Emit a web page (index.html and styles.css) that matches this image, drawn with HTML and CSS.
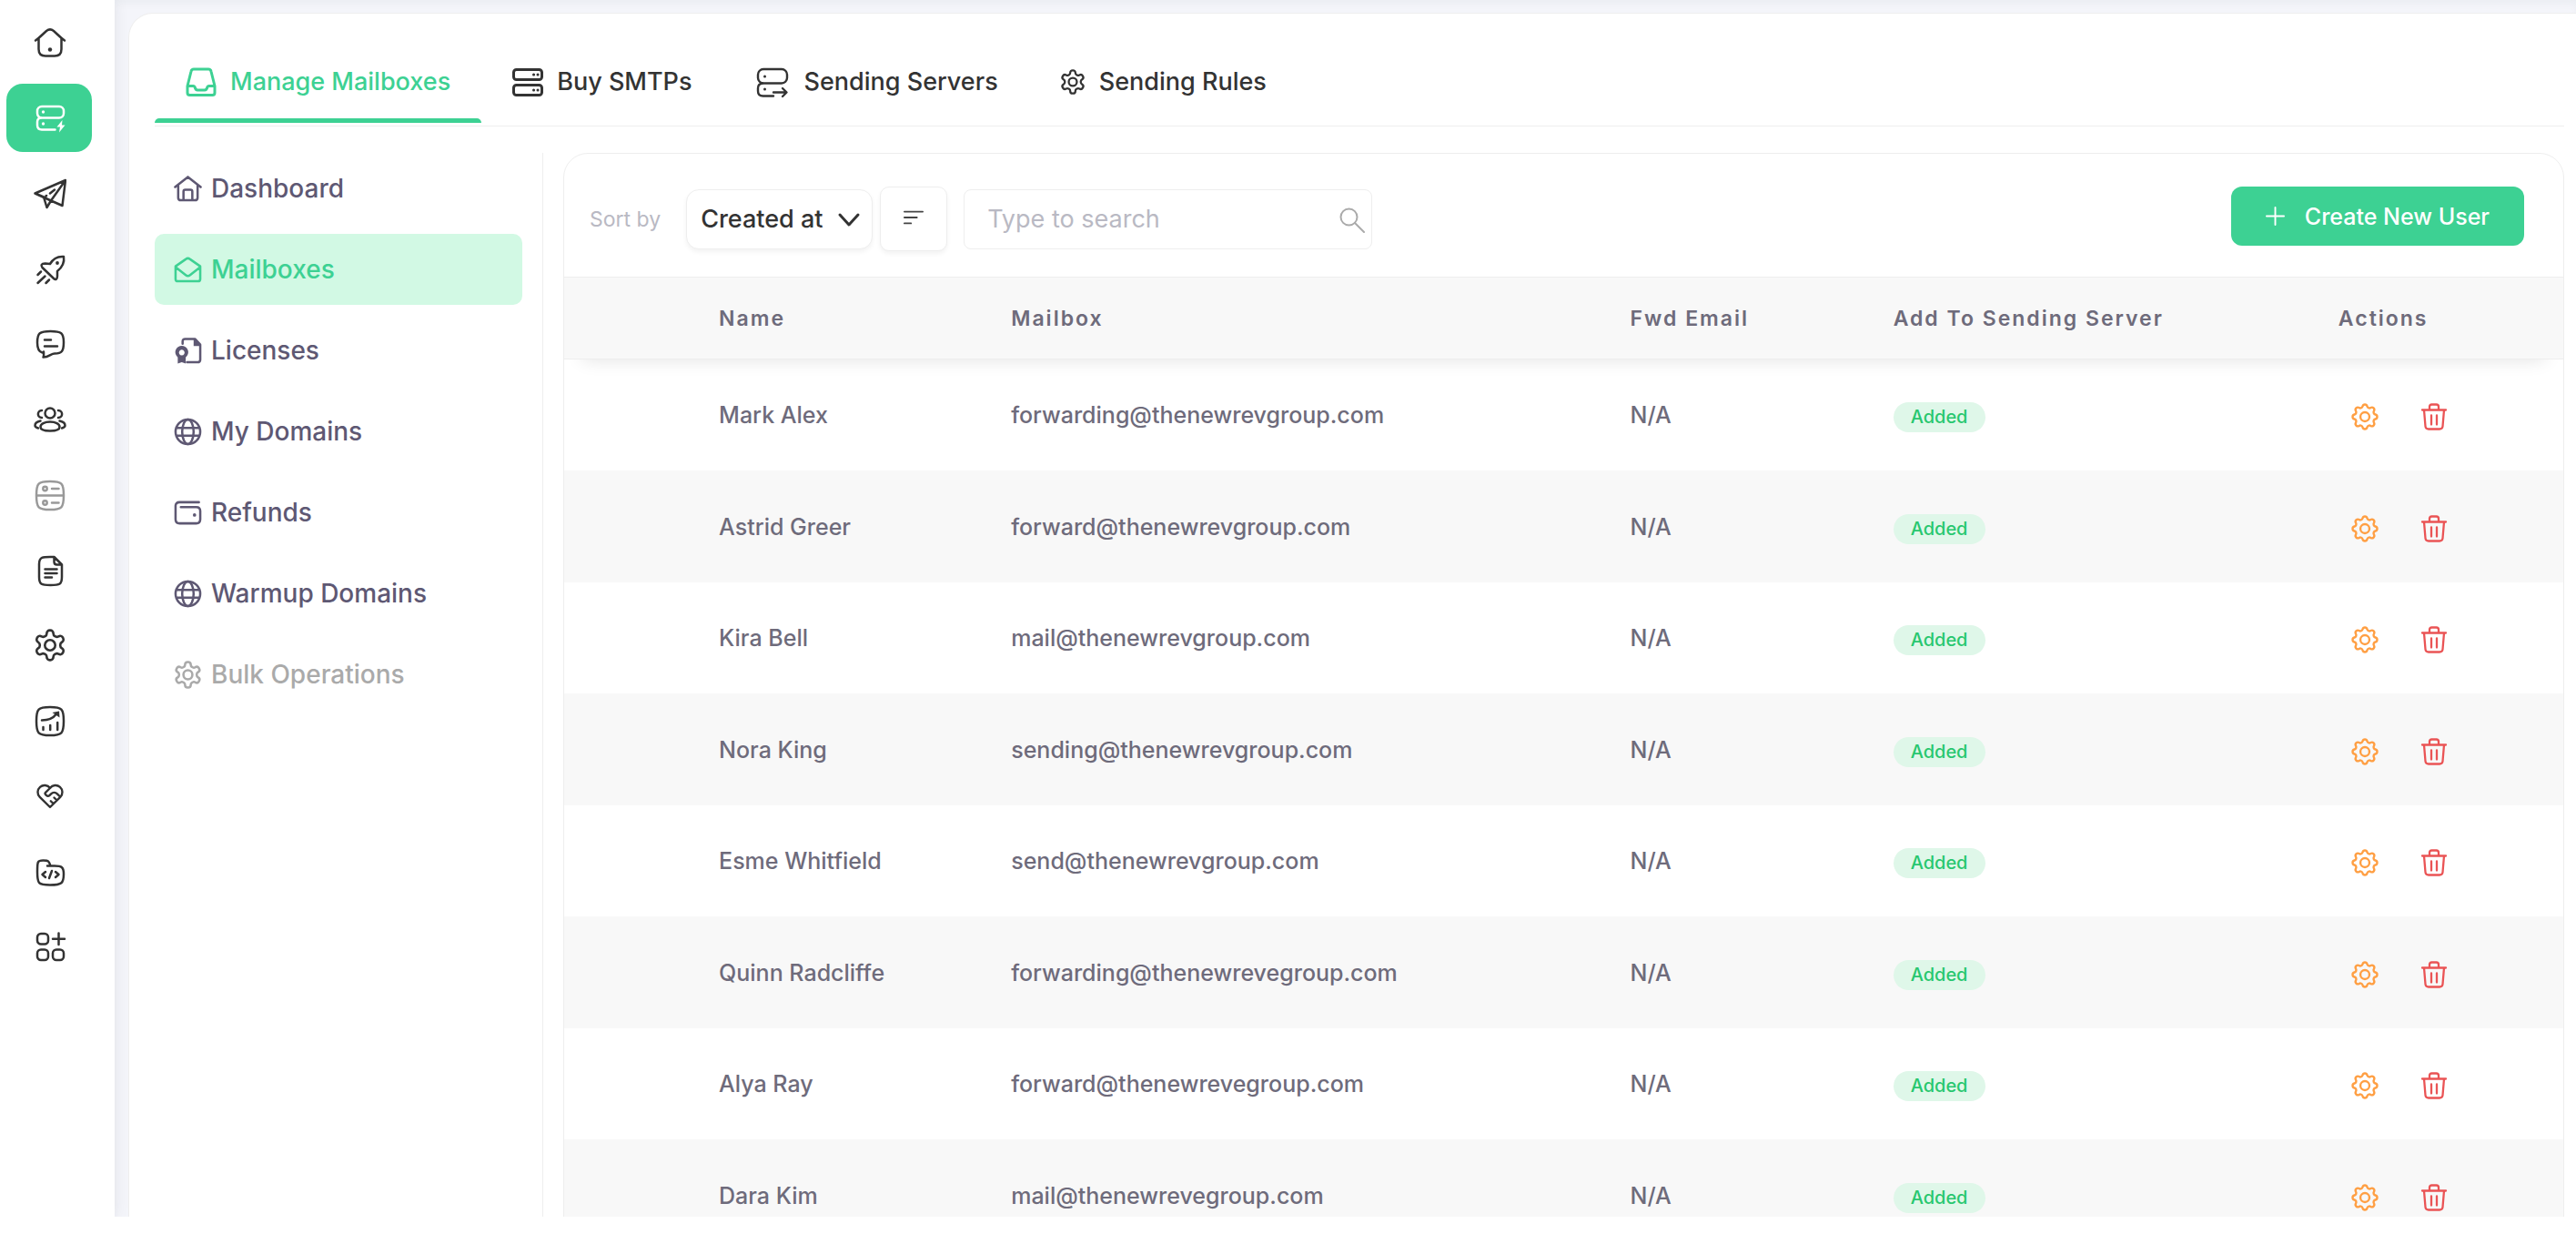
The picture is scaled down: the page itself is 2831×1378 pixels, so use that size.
FILE: index.html
```html
<!DOCTYPE html>
<html lang="en">
<head>
    <meta charset="UTF-8">
    <meta name="viewport" content="width=device-width, initial-scale=1.0">
    <title>Mailboxes</title>
    <link rel="stylesheet" href="styles.css">
</head>
<body>
    <!-- Icon sprite -->
    <svg class="sprite" aria-hidden="true">
        <symbol id="i-home" viewBox="0 0 36 36">
            <path d="M2 15.500C7 12 10 8.500 14 5q4-3.200 8 0c4 3.500 7 7 12 10.500M5.500 13.500V25q0 7.500 7.500 7.500h10q7.500 0 7.500-7.500V13.500"/>
            <circle class="fill" cx="18" cy="25.500" r="2.200"/>
        </symbol>
        <symbol id="i-server-bolt" viewBox="0 0 36 36">
            <rect x="4" y="5" width="29" height="12.500" rx="5"/>
            <path d="M8 17.500q-4 .5-4 4.500v3.500q0 5 5 5h14.500"/>
            <circle class="fill" cx="10.500" cy="11" r="1.700"/>
            <circle class="fill" cx="10.500" cy="24" r="1.700"/>
            <path class="fill" d="M31.500 20 25.500 27.500h3.500L28 33.500l6.500-8H31z"/>
        </symbol>
        <symbol id="i-plane" viewBox="0 0 36 36">
            <path d="M1.500 17.500 35 3l-3.500 28-12.500-5.500zM1.500 17.500 11 21.500l3.500 11.500L19 25.500 35 3M13.500 20.500l.5-.5M18 17.500l5-4"/>
        </symbol>
        <symbol id="i-rocket" viewBox="0 0 36 36">
            <path d="M33 4C27 3.500 21.500 6 18 12l-5.500-.5c-4 0-5 2-3 4.500L22 28c2 2 4 1 4-2.500v-5.500C31 16 34 10 33 4zM4.500 24l3.500-3.500M4.500 33l8-7.500M13.500 33l3.500-3.500"/>
            <circle class="fill" cx="26" cy="11" r="1.900"/>
        </symbol>
        <symbol id="i-chat" viewBox="0 0 36 36">
            <path d="M9.500 27.500C5 26.500 4 22 4 16.500 4 6 6.500 4 18.500 4S33 6 33 16 31 28.500 23 28.500c-4 0-6 4-12.500 4 1-2 .5-3.500.5-6M12 13.500h7M12 20.500h14"/>
        </symbol>
        <symbol id="i-users" viewBox="0 0 36 36">
            <circle cx="18" cy="11" r="5.500"/>
            <path d="M18 20.500c6 0 10.500 2.500 10.500 5.500 0 3.500-3.500 4.500-10.500 4.500S7.500 29.500 7.500 26c0-3 4.500-5.500 10.500-5.500zM9 8c-5.500 0-5.500 8 0 8M27 8c5.500 0 5.500 8 0 8M7.500 19.500C3 20.500 1.500 22.500 1.500 24.500S3 27 5 27.500M28.500 19.500c4.500 1 6 3 6 5s-1.500 2.500-3.500 3"/>
        </symbol>
        <symbol id="i-server" viewBox="0 0 36 36">
            <path d="M18 3c13 0 15 2 15 15.500S31 34 18 34 3 32 3 18.500 5 3 18 3zM3 18.500h30M20 11h7.500M20 26.500h7.500"/>
            <circle cx="12.500" cy="11" r="2.200"/>
            <circle cx="12.500" cy="26.500" r="2.200"/>
        </symbol>
        <symbol id="i-doc" viewBox="0 0 36 36">
            <path d="M22.500 3C9 2.500 6 3 6 11v14c0 8 2 9 12.500 9S31 33 31 25V11.500zM22.500 3v5.500c0 2 1 3 3 3H31M12.500 16.500h13M12.500 21h13M12.500 25.500h7.500"/>
        </symbol>
        <symbol id="i-gear" viewBox="1 1 22 22">
            <path d="M12.220 2h-.44a2 2 0 0 0-2 2v.18a2 2 0 0 1-1 1.730l-.43.25a2 2 0 0 1-2 0l-.15-.08a2 2 0 0 0-2.730.73l-.22.38a2 2 0 0 0 .73 2.730l.15.1a2 2 0 0 1 1 1.720v.51a2 2 0 0 1-1 1.740l-.15.09a2 2 0 0 0-.73 2.730l.22.38a2 2 0 0 0 2.730.73l.15-.08a2 2 0 0 1 2 0l.43.25a2 2 0 0 1 1 1.730V20a2 2 0 0 0 2 2h.44a2 2 0 0 0 2-2v-.18a2 2 0 0 1 1-1.730l.43-.25a2 2 0 0 1 2 0l.15.08a2 2 0 0 0 2.730-.73l.22-.39a2 2 0 0 0-.73-2.730l-.15-.08a2 2 0 0 1-1-1.740v-.5a2 2 0 0 1 1-1.740l.15-.09a2 2 0 0 0 .73-2.730l-.22-.38a2 2 0 0 0-2.730-.73l-.15.08a2 2 0 0 1-2 0l-.43-.25a2 2 0 0 1-1-1.730V4a2 2 0 0 0-2-2z"/>
            <circle cx="12" cy="12" r="3.500"/>
        </symbol>
        <symbol id="i-chart" viewBox="0 0 36 36">
            <path d="M18 3c13 0 15 2 15 15.500S31 34 18 34 3 32 3 18.500 5 3 18 3zM10.500 25v3M18.200 23v5M26.200 20v8M9 17.500c7 0 12-1.500 16-7"/>
            <path class="fill" d="M20.500 9l7.500-1.500.5 7z"/>
        </symbol>
        <symbol id="i-heart" viewBox="0 0 24 24">
            <path d="M19.500 12.572 12 20l-7.500-7.428A5 5 0 1 1 12 6.006a5 5 0 1 1 7.500 6.572M12 6 8.707 9.293a1 1 0 0 0 0 1.414l.543.543c.69.69 1.810.69 2.500 0l1-1a3.182 3.182 0 0 1 4.500 0l2.250 2.250M12.500 15.500l2 2M15 13l2 2"/>
        </symbol>
        <symbol id="i-folder" viewBox="0 0 36 36">
            <path d="M15 11.500h8c8 0 10 1.500 10 9 0 10-2 12-15 12S4 31 4 18C4 7 4 5.500 10.500 5.500c6 0 6.500 1 8 6M13 18l-3.500 3 3.500 3M24 18l3.500 3-3.500 3M20 17l-3 8"/>
        </symbol>
        <symbol id="i-grid" viewBox="0 0 36 36">
            <rect x="4" y="4" width="12" height="11.500" rx="4"/>
            <rect x="4" y="21.500" width="12" height="11.500" rx="4"/>
            <rect x="21" y="21.500" width="12" height="11.500" rx="4"/>
            <path d="M27.500 3.500v12.500M21 9.700h13"/>
        </symbol>
        <symbol id="i-inbox" viewBox="0 0 34 34">
            <path d="M9 3h16q2.500 0 3 2.500l4 16V29q0 2.500-2.500 2.500h-25Q2 31.500 2 29v-7.500l4-16Q6.500 3 9 3zM2 21.500h6.500q1 0 1.500 1 1 3.500 3 3.500h8q2 0 3-3.500.5-1 1.500-1H32"/>
        </symbol>
        <symbol id="i-servers" viewBox="0 0 34 34">
            <rect x="1.500" y="3.500" width="31" height="11" rx="3"/>
            <rect x="1.500" y="20.500" width="31" height="11" rx="3"/>
            <path d="M23.500 9h.1M28 9h.1M23.500 26h.1M28 26h.1"/>
        </symbol>
        <symbol id="i-server-arrow" viewBox="0 0 40 40">
            <rect x="5" y="6" width="32" height="15.500" rx="6"/>
            <path d="M10 21.500q-5 .5-5 5.500v3q0 5.500 5.500 5.500H22M22 31.500h14M32 27l4.500 4.500L32 36"/>
            <circle class="fill" cx="12.500" cy="14" r="1.500"/>
            <circle class="fill" cx="12.500" cy="28" r="1.500"/>
        </symbol>
        <symbol id="i-house" viewBox="0 0 32 32">
            <path d="M1.500 14 16 2.500 30.500 14M5 12v14q0 3 3 3h16q3 0 3-3V12M11 29V19q0-2 2-2h6q2 0 2 2v10"/>
        </symbol>
        <symbol id="i-envelope" viewBox="0 0 32 32">
            <path d="M2 12 13.500 4Q16 2 18.500 4L30 12v14.500q0 2.500-2.500 2.500h-23Q2 29 2 26.500zM2 13l11.500 9q2.500 2 5 0L30 13"/>
        </symbol>
        <symbol id="i-license" viewBox="0 0 32 32">
            <path d="M10 8V5.500Q10 2.500 13 2.500h11l6 6.500V26q0 3-3 3H15M9 11.500a6 6 0 1 0 .1 0zM9 13.500a4.500 4.500 0 1 0 .1 0z"/>
            <path class="fill" d="M22.500 2V10.500h8.500zM4.500 23h9v7.500L9 29l-4.500 1.500z"/>
        </symbol>
        <symbol id="i-globe" viewBox="0 0 32 32">
            <circle cx="16" cy="16" r="14"/>
            <ellipse cx="16" cy="16" rx="6.500" ry="14"/>
            <path d="M3.500 11.500h25M3.500 20.500h25"/>
        </symbol>
        <symbol id="i-wallet" viewBox="0 0 32 32">
            <path d="M28.500 4H6.500Q2 4 2 8v15.500Q2 28 6.500 28h19q4.500 0 4.500-4.500V14q0-4.500-4.500-4.500H8"/>
            <circle class="fill" cx="23.500" cy="18.500" r="1.900"/>
        </symbol>
        <symbol id="i-chevron" viewBox="0 0 24 24">
            <path d="M2 6l10 11L22 6"/>
        </symbol>
        <symbol id="i-sort" viewBox="0 0 24 24">
            <path d="M1 5h22M1 12h15M1 19h8"/>
        </symbol>
        <symbol id="i-search" viewBox="0 0 28 28">
            <circle cx="10.500" cy="10.500" r="9"/>
            <path d="M17 17l10 10"/>
        </symbol>
        <symbol id="i-plus" viewBox="0 0 22 22">
            <path d="M11 1v20M1 11h20"/>
        </symbol>
        <symbol id="i-cog" viewBox="2 2 20 20">
            <path d="M10.325 4.317c.426-1.756 2.924-1.756 3.350 0a1.724 1.724 0 0 0 2.573 1.066c1.543-.94 3.310.826 2.370 2.370a1.724 1.724 0 0 0 1.065 2.572c1.756.426 1.756 2.924 0 3.350a1.724 1.724 0 0 0-1.066 2.573c.94 1.543-.826 3.310-2.370 2.370a1.724 1.724 0 0 0-2.572 1.065c-.426 1.756-2.924 1.756-3.350 0a1.724 1.724 0 0 0-2.573-1.066c-1.543.94-3.310-.826-2.370-2.370a1.724 1.724 0 0 0-1.065-2.572c-1.756-.426-1.756-2.924 0-3.350a1.724 1.724 0 0 0 1.066-2.573c-.94-1.543.826-3.310 2.370-2.370 1 .608 2.296.07 2.572-1.065z"/>
            <circle cx="12" cy="12" r="3.300"/>
        </symbol>
        <symbol id="i-trash" viewBox="0 0 30 30">
            <path d="M2 7.500h26M4 7.500l1.500 18q.3 3 3.500 3h12q3.200 0 3.500-3l1.500-18M10 7.500V4q0-2.500 2.500-2.500h5Q20 1.500 20 4v3.500M12 13.500V23.500M18 13.500V23.500"/>
        </symbol>
    </svg>

    <div class="app">
        <nav class="sidebar">
            <a href="#" class="sidebar-link" aria-label="Home"><svg><use href="#i-home"/></svg></a>
            <a href="#" class="sidebar-link active" aria-label="Servers"><svg><use href="#i-server-bolt"/></svg></a>
            <a href="#" class="sidebar-link" aria-label="Campaigns"><svg><use href="#i-plane"/></svg></a>
            <a href="#" class="sidebar-link" aria-label="Launch"><svg><use href="#i-rocket"/></svg></a>
            <a href="#" class="sidebar-link" aria-label="Messages"><svg><use href="#i-chat"/></svg></a>
            <a href="#" class="sidebar-link" aria-label="Contacts"><svg><use href="#i-users"/></svg></a>
            <a href="#" class="sidebar-link disabled" aria-label="Hosting"><svg><use href="#i-server"/></svg></a>
            <a href="#" class="sidebar-link" aria-label="Documents"><svg><use href="#i-doc"/></svg></a>
            <a href="#" class="sidebar-link" aria-label="Settings"><svg><use href="#i-gear"/></svg></a>
            <a href="#" class="sidebar-link" aria-label="Reports"><svg><use href="#i-chart"/></svg></a>
            <a href="#" class="sidebar-link" aria-label="Affiliates"><svg><use href="#i-heart"/></svg></a>
            <a href="#" class="sidebar-link" aria-label="Developers"><svg><use href="#i-folder"/></svg></a>
            <a href="#" class="sidebar-link" aria-label="More apps"><svg><use href="#i-grid"/></svg></a>
        </nav>

        <main class="main">
            <div class="panel">
                <nav class="tabs">
                    <a href="#" class="tab active"><svg class="tab-icon"><use href="#i-inbox"/></svg>Manage Mailboxes</a>
                    <a href="#" class="tab"><svg class="tab-icon"><use href="#i-servers"/></svg>Buy SMTPs</a>
                    <a href="#" class="tab"><svg class="tab-icon large"><use href="#i-server-arrow"/></svg>Sending Servers</a>
                    <a href="#" class="tab"><svg class="tab-icon small"><use href="#i-gear"/></svg>Sending Rules</a>
                </nav>

                <div class="content">
                    <nav class="menu">
                        <a href="#" class="menu-item"><svg><use href="#i-house"/></svg>Dashboard</a>
                        <a href="#" class="menu-item active"><svg><use href="#i-envelope"/></svg>Mailboxes</a>
                        <a href="#" class="menu-item"><svg><use href="#i-license"/></svg>Licenses</a>
                        <a href="#" class="menu-item"><svg><use href="#i-globe"/></svg>My Domains</a>
                        <a href="#" class="menu-item"><svg><use href="#i-wallet"/></svg>Refunds</a>
                        <a href="#" class="menu-item"><svg><use href="#i-globe"/></svg>Warmup Domains</a>
                        <a href="#" class="menu-item disabled"><svg><use href="#i-gear"/></svg>Bulk Operations</a>
                    </nav>

                    <section class="card">
                        <div class="toolbar">
                            <label class="sort-label" for="sort">Sort by</label>
                            <div class="select-wrap">
                                <select id="sort">
                                    <option>Created at</option>
                                </select>
                                <svg><use href="#i-chevron"/></svg>
                            </div>
                            <button type="button" class="sort-button" aria-label="Sort direction"><svg><use href="#i-sort"/></svg></button>
                            <div class="search">
                                <input type="text" placeholder="Type to search" aria-label="Search">
                                <svg><use href="#i-search"/></svg>
                            </div>
                            <button type="button" class="create-button"><svg><use href="#i-plus"/></svg>Create New User</button>
                        </div>

                        <table class="mailboxes">
                            <colgroup>
                                <col class="col-check">
                                <col class="col-name">
                                <col class="col-mailbox">
                                <col class="col-fwd">
                                <col class="col-server">
                                <col class="col-actions">
                            </colgroup>
                            <thead>
                                <tr>
                                    <th></th>
                                    <th>Name</th>
                                    <th>Mailbox</th>
                                    <th>Fwd Email</th>
                                    <th>Add To Sending Server</th>
                                    <th>Actions</th>
                                </tr>
                            </thead>
                            <tbody>
                                <tr>
                                    <td></td>
                                    <td>Mark Alex</td>
                                    <td>forwarding@thenewrevgroup.com</td>
                                    <td>N/A</td>
                                    <td class="status"><span class="badge">Added</span></td>
                                    <td class="actions">
                                        <button type="button" class="edit" aria-label="Settings"><svg><use href="#i-cog"/></svg></button>
                                        <button type="button" class="delete" aria-label="Delete"><svg><use href="#i-trash"/></svg></button>
                                    </td>
                                </tr>
                                <tr>
                                    <td></td>
                                    <td>Astrid Greer</td>
                                    <td>forward@thenewrevgroup.com</td>
                                    <td>N/A</td>
                                    <td class="status"><span class="badge">Added</span></td>
                                    <td class="actions">
                                        <button type="button" class="edit" aria-label="Settings"><svg><use href="#i-cog"/></svg></button>
                                        <button type="button" class="delete" aria-label="Delete"><svg><use href="#i-trash"/></svg></button>
                                    </td>
                                </tr>
                                <tr>
                                    <td></td>
                                    <td>Kira Bell</td>
                                    <td>mail@thenewrevgroup.com</td>
                                    <td>N/A</td>
                                    <td class="status"><span class="badge">Added</span></td>
                                    <td class="actions">
                                        <button type="button" class="edit" aria-label="Settings"><svg><use href="#i-cog"/></svg></button>
                                        <button type="button" class="delete" aria-label="Delete"><svg><use href="#i-trash"/></svg></button>
                                    </td>
                                </tr>
                                <tr>
                                    <td></td>
                                    <td>Nora King</td>
                                    <td>sending@thenewrevgroup.com</td>
                                    <td>N/A</td>
                                    <td class="status"><span class="badge">Added</span></td>
                                    <td class="actions">
                                        <button type="button" class="edit" aria-label="Settings"><svg><use href="#i-cog"/></svg></button>
                                        <button type="button" class="delete" aria-label="Delete"><svg><use href="#i-trash"/></svg></button>
                                    </td>
                                </tr>
                                <tr>
                                    <td></td>
                                    <td>Esme Whitfield</td>
                                    <td>send@thenewrevgroup.com</td>
                                    <td>N/A</td>
                                    <td class="status"><span class="badge">Added</span></td>
                                    <td class="actions">
                                        <button type="button" class="edit" aria-label="Settings"><svg><use href="#i-cog"/></svg></button>
                                        <button type="button" class="delete" aria-label="Delete"><svg><use href="#i-trash"/></svg></button>
                                    </td>
                                </tr>
                                <tr>
                                    <td></td>
                                    <td>Quinn Radcliffe</td>
                                    <td>forwarding@thenewrevegroup.com</td>
                                    <td>N/A</td>
                                    <td class="status"><span class="badge">Added</span></td>
                                    <td class="actions">
                                        <button type="button" class="edit" aria-label="Settings"><svg><use href="#i-cog"/></svg></button>
                                        <button type="button" class="delete" aria-label="Delete"><svg><use href="#i-trash"/></svg></button>
                                    </td>
                                </tr>
                                <tr>
                                    <td></td>
                                    <td>Alya Ray</td>
                                    <td>forward@thenewrevegroup.com</td>
                                    <td>N/A</td>
                                    <td class="status"><span class="badge">Added</span></td>
                                    <td class="actions">
                                        <button type="button" class="edit" aria-label="Settings"><svg><use href="#i-cog"/></svg></button>
                                        <button type="button" class="delete" aria-label="Delete"><svg><use href="#i-trash"/></svg></button>
                                    </td>
                                </tr>
                                <tr>
                                    <td></td>
                                    <td>Dara Kim</td>
                                    <td>mail@thenewrevegroup.com</td>
                                    <td>N/A</td>
                                    <td class="status"><span class="badge">Added</span></td>
                                    <td class="actions">
                                        <button type="button" class="edit" aria-label="Settings"><svg><use href="#i-cog"/></svg></button>
                                        <button type="button" class="delete" aria-label="Delete"><svg><use href="#i-trash"/></svg></button>
                                    </td>
                                </tr>
                            </tbody>
                        </table>
                    </section>
                </div>
            </div>
        </main>
    </div>
</body>
</html>
```
FILE: styles.css
```css
* {
    box-sizing: border-box;
}

body {
    margin: 0;
    background-color: #fff;
    font-family: Inter, "Liberation Sans", sans-serif;
    font-weight: 500;
    color: #333;
    overflow: hidden;
}

a {
    color: inherit;
    text-decoration: none;
}

button,
input,
select {
    font-family: inherit;
    font-weight: inherit;
}

svg {
    display: block;
    flex-shrink: 0;
    fill: none;
    stroke: currentColor;
    stroke-width: 2;
    stroke-linecap: round;
    stroke-linejoin: round;
}

.sprite {
    position: absolute;
    width: 0;
    height: 0;
}

.fill {
    fill: currentColor;
    stroke: none;
}

.app {
    display: flex;
    height: calc(100vh - 41px);
    overflow: hidden;
}

/* Icon sidebar */
.sidebar {
    position: relative;
    z-index: 1;
    flex-shrink: 0;
    width: 126px;
    padding: 9px 7px;
    background-color: #fff;
    box-shadow: 0 0 16px rgba(34, 41, 47, 0.08);
}

.sidebar-link {
    display: flex;
    align-items: center;
    justify-content: center;
    width: 94px;
    height: 75px;
    margin-bottom: 8px;
    padding-left: 1px;
    border-radius: 18px;
}

.sidebar-link:nth-child(4n) {
    margin-bottom: 7px;
}

.sidebar-link svg {
    width: 36px;
    height: 36px;
    stroke-width: 2.5px;
}

.sidebar-link use[href="#i-gear"],
.sidebar-link use[href="#i-heart"] {
    stroke-width: 1.6px;
}

.sidebar-link.active {
    background-color: #3dd193;
    color: #fff;
}

.sidebar-link.disabled {
    color: #999;
}

/* Main panel */
.main {
    flex: 1;
    min-width: 0;
    padding: 14px 0 0 15px;
    background-color: #f4f5fa;
    box-shadow: inset 0 6px 8px -2px rgba(34, 41, 47, 0.04);
}

.panel {
    min-height: 100%;
    padding: 28px 13px 0 28px;
    background-color: #fff;
    border: 1px solid #eee;
    border-right: none;
    border-radius: 27px 0 0 0;
}

.tabs {
    display: flex;
    padding-bottom: 3px;
    border-bottom: 1px solid #eee;
}

.tab {
    display: flex;
    align-items: center;
    gap: 15px;
    height: 92px;
    padding: 7px 34px 0;
    border-bottom: 5px solid transparent;
    font-size: 27px;
    line-height: 32px;
    position: relative;
}

.tab.active {
    color: #3dd193;
}

.tab.active::after {
    content: "";
    position: absolute;
    left: 0;
    right: 0;
    bottom: -5px;
    height: 5px;
    border-radius: 5px 5px 0 0;
    background-color: #3dd193;
}

.tab-icon {
    width: 34px;
    height: 34px;
    stroke-width: 3px;
}

.tab-icon.large {
    width: 40px;
    height: 40px;
    stroke-width: 2.4px;
}

.tab-icon.small {
    width: 28px;
    height: 28px;
    stroke-width: 1.8px;
}

.content {
    display: flex;
    align-items: flex-start;
    gap: 22px;
    padding-top: 29px;
}

/* Left menu */
.menu {
    flex-shrink: 0;
    width: 427px;
    height: 100vh;
    padding-right: 22px;
    border-right: 1px solid #eee;
}

.menu-item {
    display: flex;
    align-items: center;
    gap: 10px;
    height: 78px;
    margin-bottom: 11px;
    padding: 0 21px;
    border-radius: 10px;
    font-size: 28px;
    color: #5e5873;
}

.menu-item svg {
    width: 31px;
    height: 31px;
    stroke-width: 2.6px;
}

.menu-item use[href="#i-gear"] {
    stroke-width: 1.8px;
}

.menu-item.active {
    background-color: #d2f9e4;
    color: #3dd193;
}

.menu-item.disabled {
    color: #aaa;
}

/* Table card */
.card {
    flex: 1;
    min-width: 0;
    border: 1px solid #eee;
    border-radius: 27px 27px 0 0;
}

.toolbar {
    display: flex;
    align-items: center;
    padding: 36px 43px 28px 28px;
    border-bottom: 1px solid #eee;
}

.sort-label {
    margin-right: 28px;
    font-size: 23px;
    font-weight: 400;
    color: #b9b9c3;
}

.select-wrap {
    position: relative;
    margin-right: 8px;
}

.select-wrap select {
    width: 205px;
    height: 66px;
    padding: 0 15px;
    border: 1px solid #eee;
    border-radius: 14px;
    background-color: #fff;
    box-shadow: 0 3px 5px rgba(0, 0, 0, 0.05);
    font-size: 27px;
    color: #333;
    appearance: none;
}

.select-wrap svg {
    position: absolute;
    top: 22px;
    right: 13px;
    width: 26px;
    height: 24px;
    stroke-width: 3px;
    pointer-events: none;
}

.sort-button {
    display: flex;
    align-items: center;
    justify-content: center;
    width: 74px;
    height: 71px;
    margin-right: 18px;
    padding: 0 0 4px;
    border: 1px solid #eee;
    border-radius: 10px;
    background-color: #fff;
    box-shadow: 0 3px 5px rgba(0, 0, 0, 0.05);
    color: #444;
}

.sort-button svg {
    width: 22px;
    height: 22px;
}

.search {
    position: relative;
    width: 449px;
}

.search input {
    display: block;
    width: 100%;
    height: 66px;
    padding: 0 50px 0 25px;
    border: 1px solid #eee;
    border-radius: 8px;
    background-color: #fff;
    font-size: 27px;
    font-weight: 400;
}

.search input::placeholder {
    color: #b9b9c3;
}

.search svg {
    position: absolute;
    top: 20px;
    right: 8px;
    width: 28px;
    height: 28px;
    color: #aaa;
}

.create-button {
    display: flex;
    align-items: center;
    align-self: flex-start;
    gap: 22px;
    height: 65px;
    margin-left: auto;
    padding: 0 38px;
    border: none;
    border-radius: 12px;
    background-color: #3dd193;
    font-size: 25px;
    color: #fff;
}

.create-button svg {
    width: 21px;
    height: 21px;
}

.mailboxes {
    width: 100%;
    table-layout: fixed;
    border-spacing: 0;
    font-size: 25px;
    color: #6e6b7b;
}

.col-check { width: 146px; }
.col-name { width: 321px; }
.col-mailbox { width: 680px; }
.col-fwd { width: 289px; }
.col-server { width: 489px; }
.col-actions { width: 271px; }

.mailboxes thead {
    box-shadow: 0 20px 20px -20px rgba(0, 0, 0, 0.12);
}

.mailboxes th {
    height: 90px;
    padding: 0 24px;
    border-bottom: 1px solid #eee;
    background-color: #f8f8f8;
    font-size: 23px;
    font-weight: 600;
    letter-spacing: 2px;
    text-align: left;
    white-space: nowrap;
}

.mailboxes td {
    height: 122px;
    padding: 0 24px;
}

.mailboxes tbody tr:nth-child(even) td {
    height: 123px;
    background-color: #f8f8f8;
}

.mailboxes .status {
    padding-top: 5px;
}

.mailboxes .actions {
    padding-top: 2px;
}

.badge {
    display: block;
    width: fit-content;
    padding: 0 19px;
    border-radius: 17px;
    background-color: #dff7e9;
    font-size: 20px;
    line-height: 33px;
    color: #28c76f;
}

.actions button {
    display: inline-block;
    vertical-align: middle;
    padding: 0;
    border: none;
    background: none;
}

.actions svg {
    width: 30px;
    height: 30px;
}

.actions .edit {
    margin: 0 39px 0 14px;
    color: #ff9f43;
}

.actions .edit svg {
    stroke-width: 1.6px;
}

.actions .delete {
    color: #ea5455;
}

.actions .delete svg {
    stroke-width: 2.3px;
}
```
